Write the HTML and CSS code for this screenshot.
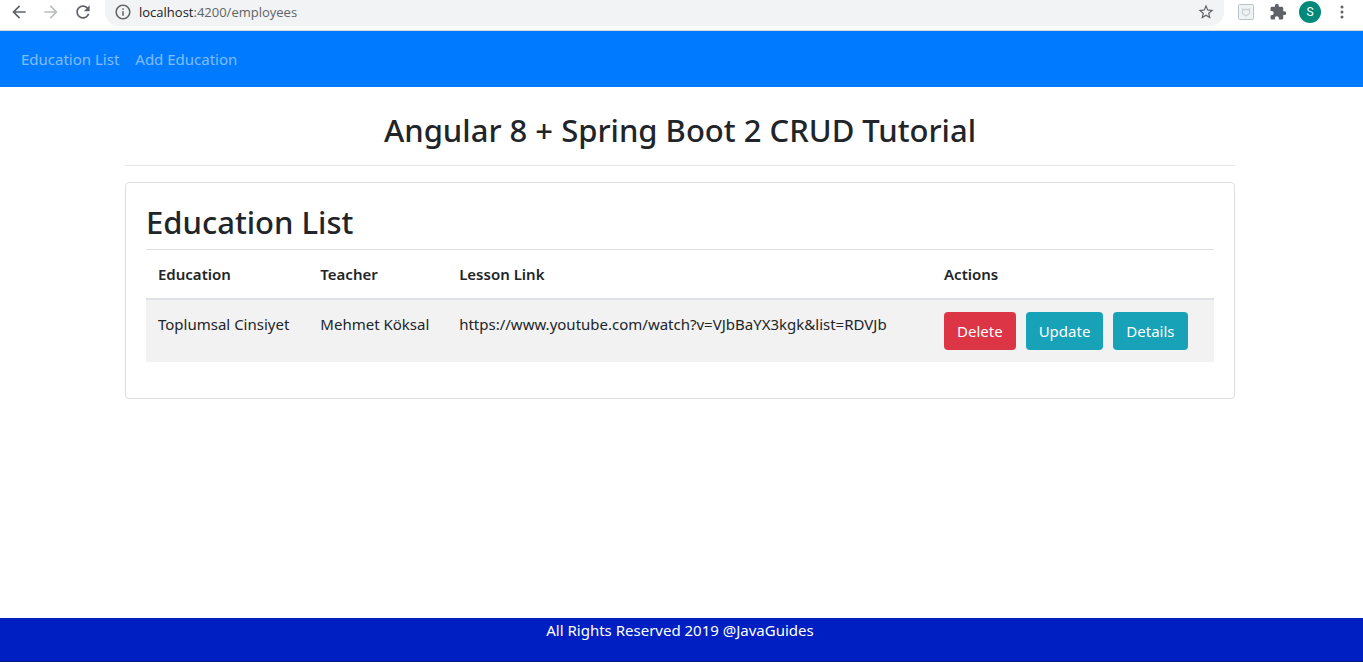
FILE: index.html
```html
<!DOCTYPE html>
<html lang="en">
<head>
<meta charset="utf-8">
<meta name="viewport" content="width=device-width, initial-scale=1">
<title>Education List</title>
<link rel="stylesheet" href="styles.css">
</head>
<body>
<div class="toolbar">
  <button class="tool" type="button" aria-label="Back">
    <svg class="icon" viewBox="0 0 24 24"><path d="M20 11H7.83l5.59-5.59L12 4l-8 8 8 8 1.41-1.41L7.83 13H20v-2z"/></svg>
  </button>
  <button class="tool tool-muted" type="button" aria-label="Forward">
    <svg class="icon" viewBox="0 0 24 24"><path d="M12 4l-1.41 1.41L16.17 11H4v2h12.17l-5.58 5.59L12 20l8-8z"/></svg>
  </button>
  <button class="tool" type="button" aria-label="Reload">
    <svg class="icon" viewBox="0 0 24 24"><path d="M17.65 6.35C16.2 4.9 14.21 4 12 4c-4.42 0-7.99 3.58-7.99 8s3.57 8 7.99 8c3.73 0 6.84-2.55 7.73-6h-2.08c-.82 2.33-3.04 4-5.65 4-3.31 0-6-2.69-6-6s2.69-6 6-6c1.66 0 3.14.69 4.22 1.78L13 11h7V4l-2.35 2.35z"/></svg>
  </button>
  <div class="address">
    <svg class="info" viewBox="0 0 24 24"><path d="M11 7h2v2h-2zm0 4h2v6h-2zm1-9C6.48 2 2 6.48 2 12s4.48 10 10 10 10-4.48 10-10S17.52 2 12 2zm0 18c-4.41 0-8-3.59-8-8s3.59-8 8-8 8 3.59 8 8-3.59 8-8 8z"/></svg>
    <span class="url"><span class="host">localhost</span>:4200/employees</span>
    <button class="tool" type="button" aria-label="Bookmark">
      <svg class="star" viewBox="0 0 24 24"><path d="M22 9.24l-7.19-.62L12 2 9.19 8.63 2 9.24l5.46 4.73L5.82 21 12 17.27 18.18 21l-1.63-7.03L22 9.24zM12 15.4l-3.76 2.27 1-4.28-3.32-2.88 4.38-.38L12 6.1l1.71 4.04 4.38.38-3.32 2.88 1 4.28L12 15.4z"/></svg>
    </button>
  </div>
  <div class="extensions">
    <button class="tool" type="button" aria-label="Shield">
      <svg class="shield" viewBox="0 0 16 16"><rect x=".5" y=".5" width="15" height="15" rx="1" fill="#f0f3f4" stroke="#b9c2c6"/><path d="M4.500 5l2 1L8 5l1.500 1 2-1v4.500L8 12 4.500 9.500z" fill="none" stroke="#cdd1d3" stroke-width="1.300"/></svg>
    </button>
    <button class="tool" type="button" aria-label="Extensions">
      <svg class="puzzle" viewBox="0 0 24 24"><path d="M20.500 11H19V7c0-1.100-.9-2-2-2h-4V3.500a2.500 2.500 0 0 0-5 0V5H4c-1.100 0-1.990.9-1.990 2v3.800H3.500c1.490 0 2.700 1.210 2.700 2.700s-1.210 2.700-2.700 2.700H2V20c0 1.100.9 2 2 2h3.800v-1.500c0-1.490 1.210-2.700 2.700-2.700s2.700 1.210 2.700 2.700V22H17c1.100 0 2-.9 2-2v-4h1.500a2.500 2.500 0 0 0 0-5z"/></svg>
    </button>
    <button class="avatar" type="button">S</button>
    <button class="tool" type="button" aria-label="Menu">
      <svg class="menu" viewBox="0 0 18 18"><circle cx="9" cy="4" r="1.500"/><circle cx="9" cy="9" r="1.500"/><circle cx="9" cy="14" r="1.500"/></svg>
    </button>
  </div>
</div>
<nav class="navbar">
  <a class="nav-link" href="#list">Education List</a>
  <a class="nav-link" href="#add">Add Education</a>
</nav>
<main class="container">
  <h2 class="title">Angular 8 + Spring Boot 2 CRUD Tutorial</h2>
  <hr class="rule">
  <section class="card" id="list">
    <h2 class="card-title">Education List</h2>
    <table class="table">
      <thead>
        <tr>
          <th class="col-education">Education</th>
          <th class="col-teacher">Teacher</th>
          <th class="col-link">Lesson Link</th>
          <th>Actions</th>
        </tr>
      </thead>
      <tbody>
        <tr>
          <td>Toplumsal Cinsiyet</td>
          <td>Mehmet Köksal</td>
          <td>https://www.youtube.com/watch?v=VJbBaYX3kgk&amp;list=RDVJb</td>
          <td>
            <div class="actions">
              <button class="btn btn-danger" type="button">Delete</button>
              <button class="btn btn-info" type="button">Update</button>
              <button class="btn btn-info" type="button">Details</button>
            </div>
          </td>
        </tr>
      </tbody>
    </table>
  </section>
</main>
<footer class="footer">All Rights Reserved 2019 @JavaGuides</footer>
</body>
</html>
```
FILE: styles.css
```css
* {
  box-sizing: border-box;
}

body {
  display: flex;
  flex-direction: column;
  min-height: 100vh;
  margin: 0;
  background: #fff;
  color: #212529;
  font-family: "Noto Sans", "Open Sans", sans-serif;
  font-size: 15px;
  line-height: 24px;
}

button {
  border: 0;
  font: inherit;
  cursor: pointer;
}

/* Browser toolbar */
.toolbar {
  display: flex;
  align-items: flex-start;
  height: 31px;
  padding-left: 3px;
  border-bottom: 1px solid #d5d7da;
}

.tool {
  display: flex;
  align-items: center;
  justify-content: center;
  width: 32px;
  height: 24px;
  padding: 0;
  background: none;
  fill: #5f6368;
}

.tool-muted {
  fill: #babcbe;
}

.icon {
  width: 20px;
  height: 20px;
  stroke: currentColor;
  stroke-width: 0;
}

.address {
  display: flex;
  flex: 1;
  align-items: center;
  height: 26px;
  margin-left: 6px;
  padding: 0 2px 2px 9px;
  border-radius: 0 0 14px 14px;
  background: #f1f3f4;
}

.info {
  width: 18px;
  height: 18px;
  fill: #5f6368;
}

.url {
  flex: 1;
  padding-left: 7px;
  color: #5f6368;
  font-family: "Open Sans", "Noto Sans", sans-serif;
  font-size: 13px;
}

.host {
  color: #202124;
}

.star,
.puzzle,
.menu {
  width: 18px;
  height: 18px;
}

.shield {
  width: 16px;
  height: 16px;
}

.extensions {
  display: flex;
  align-items: center;
  padding: 0 5px 0 6px;
}

.avatar {
  width: 22px;
  height: 22px;
  margin: 0 5px;
  padding: 0;
  border-radius: 50%;
  background: #00897b;
  color: #fff;
  font-family: Roboto, sans-serif;
  font-size: 12px;
  line-height: 22px;
}

/* Site navigation */
.navbar {
  display: flex;
  gap: 16px;
  padding: 16px 21px;
  background: #007bff;
}

.nav-link {
  color: rgba(255, 255, 255, 0.5);
  text-decoration: none;
}

/* Page content */
.container {
  width: 100%;
  max-width: 1143px;
  margin: 0 auto;
  padding: 24px 18px 24px 15px;
}

.title,
.card-title {
  margin: 0;
  font-size: 31px;
  font-weight: 500;
  line-height: 38px;
}

.title {
  text-align: center;
}

.rule {
  margin: 16px 0;
  border: 0;
  border-top: 1px solid #e5e5e5;
}

.card {
  padding: 20px;
  border: 1px solid #dfdfdf;
  border-radius: 4px;
}

.card-title {
  margin-bottom: 8px;
}

.table {
  width: 100%;
  margin-bottom: 16px;
  border-collapse: separate;
  border-spacing: 0;
  table-layout: fixed;
}

.table th,
.table td {
  padding: 12px;
  text-align: left;
  vertical-align: top;
}

.table th {
  border-top: 1px solid #dee2e6;
  border-bottom: 2px solid #dee2e6;
  font-weight: 600;
}

.table td {
  background: #f2f2f2;
}

.col-education {
  width: 15.2%;
}

.col-teacher {
  width: 13%;
}

.col-link {
  width: 45.4%;
}

.actions {
  display: flex;
  gap: 10px;
}

.btn {
  height: 38px;
  padding: 0 13px;
  border-radius: 4px;
  color: #fff;
}

.btn-danger {
  background: #dc3545;
}

.btn-info {
  background: #17a2b8;
}

.footer {
  min-height: 44px;
  margin-top: auto;
  padding-right: 3px;
  border-bottom: 1px solid #00148c;
  background: #001fc2;
  color: #fff;
  text-align: center;
}
```
